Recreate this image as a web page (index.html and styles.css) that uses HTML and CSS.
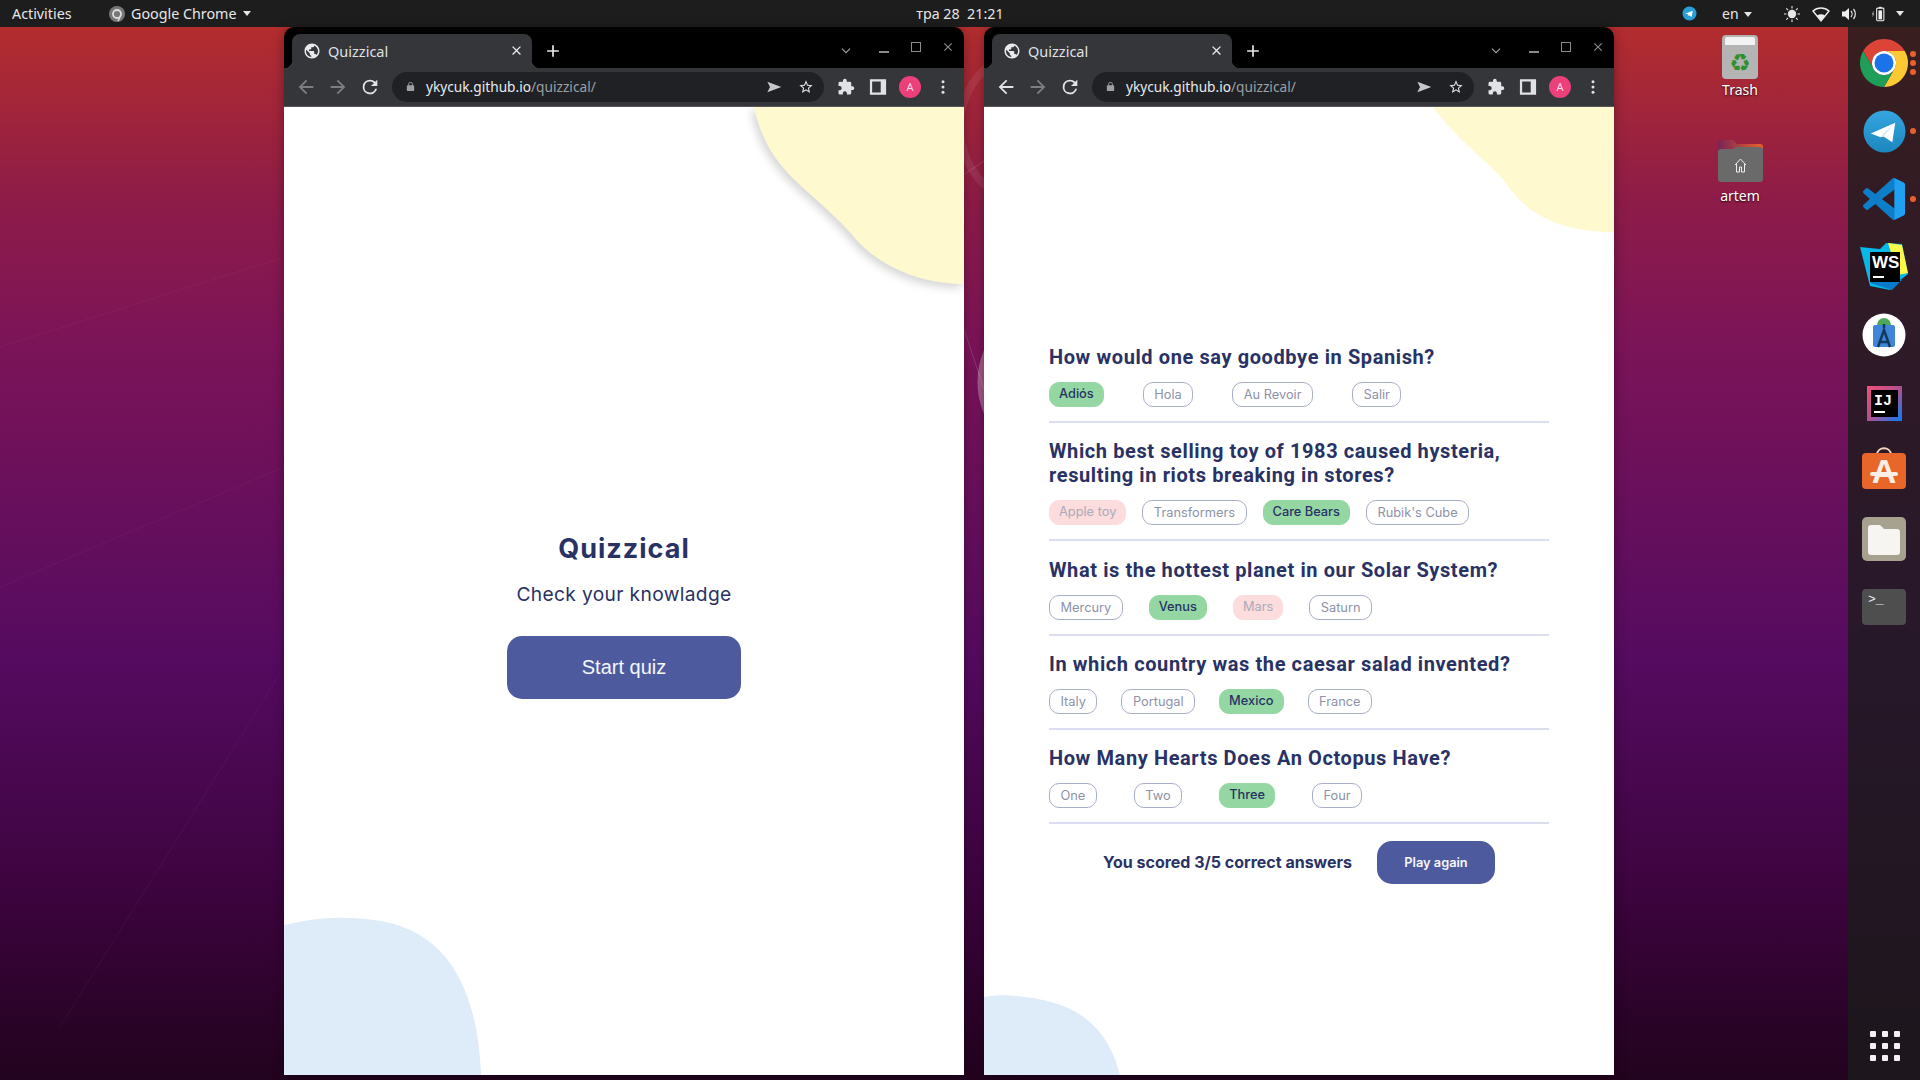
FILE: index.html
```html
<!DOCTYPE html>
<html lang="en">

<head>
    <meta charset="UTF-8">
    <title>Quizzical</title>
    <link rel="stylesheet" href="styles.css">
</head>

<body>
    <!-- Shared toolbar icons -->
    <svg class="sprite" xmlns="http://www.w3.org/2000/svg">
        <symbol id="i-globe" viewBox="0 0 24 24"><path d="M12 2C6.48 2 2 6.48 2 12s4.48 10 10 10 10-4.48 10-10S17.52 2 12 2zm-1 17.93c-3.95-.49-7-3.85-7-7.93 0-.62.08-1.21.21-1.79L9 15v1c0 1.1.9 2 2 2v1.93zm6.9-2.54c-.26-.81-1-1.39-1.9-1.39h-1v-3c0-.55-.45-1-1-1H8v-2h2c.55 0 1-.45 1-1V7h2c1.1 0 2-.9 2-2v-.41c2.93 1.19 5 4.06 5 7.41 0 2.08-.8 3.97-2.1 5.39z"/></symbol>
        <symbol id="i-back" viewBox="0 0 24 24"><path d="M20 11H7.83l5.59-5.59L12 4l-8 8 8 8 1.41-1.41L7.83 13H20z"/></symbol>
        <symbol id="i-forward" viewBox="0 0 24 24"><path d="M12 4l-1.41 1.41L16.17 11H4v2h12.17l-5.58 5.59L12 20l8-8z"/></symbol>
        <symbol id="i-reload" viewBox="0 0 24 24"><path d="M17.65 6.35A7.96 7.96 0 0 0 12 4a8 8 0 1 0 7.75 10h-2.08A6 6 0 1 1 12 6c1.66 0 3.14.69 4.22 1.78L13 11h7V4z"/></symbol>
        <symbol id="i-lock" viewBox="0 0 24 24"><path d="M18 9h-1V7a5 5 0 0 0-10 0v2H6a2 2 0 0 0-2 2v9a2 2 0 0 0 2 2h12a2 2 0 0 0 2-2v-9a2 2 0 0 0-2-2zM9 7a3 3 0 0 1 6 0v2H9z"/></symbol>
        <symbol id="i-send" viewBox="0 0 24 24"><path d="M2 4l21 8-21 8 4-8z"/></symbol>
        <symbol id="i-star" viewBox="0 0 24 24"><path d="M22 9.24l-7.19-.62L12 2 9.19 8.63 2 9.24l5.46 4.73L5.82 21 12 17.27 18.18 21l-1.63-7.03L22 9.24zM12 15.4l-3.76 2.27 1-4.28-3.32-2.88 4.38-.38L12 6.1l1.71 4.04 4.38.38-3.32 2.88 1 4.28L12 15.4z"/></symbol>
        <symbol id="i-puzzle" viewBox="0 0 24 24"><path d="M20.5 11H19V7c0-1.1-.9-2-2-2h-4V3.5C13 2.12 11.88 1 10.5 1S8 2.12 8 3.5V5H4c-1.1 0-1.99.9-1.99 2v3.8H3.5c1.49 0 2.7 1.21 2.7 2.7s-1.21 2.7-2.7 2.7H2V20c0 1.1.9 2 2 2h3.8v-1.5c0-1.49 1.21-2.7 2.7-2.7 1.49 0 2.7 1.21 2.7 2.7V22H17c1.1 0 2-.9 2-2v-4h1.5c1.38 0 2.5-1.12 2.5-2.5S21.88 11 20.5 11z"/></symbol>
        <symbol id="i-panel" viewBox="2 2 20 20"><path fill-rule="evenodd" d="M3 3.500h18v17H3zM5.500 6v12H15V6z"/></symbol>
        <symbol id="i-menu" viewBox="0 0 24 24"><circle cx="12" cy="5" r="2"/><circle cx="12" cy="12" r="2"/><circle cx="12" cy="19" r="2"/></symbol>
        <symbol id="i-close" viewBox="0 0 24 24"><path d="M19 6.41L17.59 5 12 10.59 6.41 5 5 6.41 10.59 12 5 17.59 6.41 19 12 13.41 17.59 19 19 17.59 13.41 12z"/></symbol>
        <symbol id="i-plus" viewBox="0 0 24 24"><path d="M19 13h-6v6h-2v-6H5v-2h6V5h2v6h6z"/></symbol>
        <symbol id="i-chevron" viewBox="0 0 24 24"><path d="M5 8l7 7 7-7" fill="none" stroke="currentColor" stroke-width="2"/></symbol>
    </svg>

    <!-- Top panel -->
    <header class="panel">
        <div class="panel-left">
            <span class="activities">Activities</span>
            <span class="app-menu">
                <svg class="app-icon" viewBox="0 0 16 16"><circle cx="8" cy="8" r="8" fill="#777"/><circle cx="8" cy="8" r="4" fill="none" stroke="#ddd" stroke-width="1.8"/><path d="M11 11l-2 4" stroke="#ddd" stroke-width="1.6"/></svg>
                Google Chrome
                <span class="caret"></span>
            </span>
        </div>
        <div class="clock">тра 28&nbsp; 21:21</div>
        <div class="panel-right">
            <svg class="tray-tg" viewBox="0 0 16 16"><circle cx="8" cy="8" r="7.5" fill="#2a9fd8"/><path d="M3.5 8.2L11.5 5l-1.2 6.6-2.4-1.7-1 1-.3-2z" fill="#fff"/></svg>
            <span class="lang">en <span class="caret"></span></span>
            <svg class="tray tray-sun" viewBox="0 0 18 18"><circle cx="9" cy="9" r="4.2" fill="#e8e8e8"/><path d="M9 1v2.5M9 14.5V17M1 9h2.5M14.5 9H17M3.3 3.3l1.8 1.8M12.9 12.9l1.8 1.8M3.3 14.7l1.8-1.8M12.9 5.1l1.8-1.8" stroke="#e8e8e8" stroke-width="1.1"/></svg>
            <svg class="tray tray-wifi" viewBox="0 0 18 18"><path d="M1 6c4.5-4 11.500-4 16 0l-8 10z" fill="none" stroke="#eee" stroke-width="1.4"/><path d="M5 10.500c2.300-1.600 5.700-1.600 8 0l-4 5.500z" fill="#eee"/></svg>
            <svg class="tray tray-sound" viewBox="0 0 18 18"><path d="M2 6.500h3L9 3v12l-4-3.500H2z" fill="#eee"/><path d="M11 6c1.400 1.600 1.400 4.400 0 6M13.500 4c2.400 2.800 2.400 7.200 0 10" fill="none" stroke="#eee" stroke-width="1.200"/></svg>
            <svg class="tray tray-batt" viewBox="0 0 20 18"><path d="M3 9.500L5 5v3.500h1L4 13V9.500z" fill="#999"/><rect x="8.500" y="2.500" width="8" height="14" rx="1" fill="none" stroke="#eee" stroke-width="1.200"/><rect x="11" y="1" width="3" height="1.500" fill="#eee"/><rect x="10.500" y="5" width="4" height="10" fill="#eee"/></svg>
            <span class="caret caret-last"></span>
        </div>
    </header>

    <div class="desktop">
        <!-- Faint lines of the wallpaper -->
        <svg class="wall-lines" viewBox="0 0 1920 1053">
            <circle cx="1060" cy="355" r="78" fill="none" stroke="#fff" stroke-opacity=".3" stroke-width="9"/>
            <circle cx="1040" cy="100" r="80" fill="none" stroke="#fff" stroke-opacity=".08" stroke-width="8"/>
            <path d="M960 150l30-20M960 290l30 90" stroke="#fff" stroke-opacity=".14" fill="none"/>
            <path d="M0 320l284-90M0 560l284-120M60 1000l224-360" stroke="#fff" stroke-opacity=".04" fill="none"/>
        </svg>

        <!-- Left window: start screen -->
        <section class="window window-start">
            <div class="titlebar">
                <div class="tab">
                    <svg class="ic ic-globe"><use href="#i-globe"/></svg>
                    <span class="tab-title">Quizzical</span>
                    <svg class="ic ic-tabclose"><use href="#i-close"/></svg>
                </div>
                <svg class="ic ic-plus"><use href="#i-plus"/></svg>
                <svg class="ic ic-tabs"><use href="#i-chevron"/></svg>
                <div class="win-controls">
                    <span class="ctl-min"></span>
                    <span class="ctl-max"></span>
                    <svg class="ic ctl-close"><use href="#i-close"/></svg>
                </div>
            </div>
            <div class="toolbar">
                <svg class="ic nav dim"><use href="#i-back"/></svg>
                <svg class="ic nav dim"><use href="#i-forward"/></svg>
                <svg class="ic nav"><use href="#i-reload"/></svg>
                <div class="omnibox">
                    <svg class="ic ic-lock"><use href="#i-lock"/></svg>
                    <span class="url">ykycuk.github.io<span class="url-path">/quizzical/</span></span>
                    <svg class="ic ic-send"><use href="#i-send"/></svg>
                    <svg class="ic ic-star"><use href="#i-star"/></svg>
                </div>
                <svg class="ic tool"><use href="#i-puzzle"/></svg>
                <svg class="ic tool"><use href="#i-panel"/></svg>
                <span class="avatar">A</span>
                <svg class="ic tool"><use href="#i-menu"/></svg>
            </div>
            <main class="page page-start">
                <svg class="blob" viewBox="0 0 680 968">
                    <path class="blob-yellow blob-shadow" d="M470 0C476 28 487 47 501 63C515 79 552 108 570 130C586 150 625 177 680 177V0Z"/>
                    <path class="blob-blue" d="M0 818C30 811 55 809 81 812C125 816 192 835 197 968H0Z"/>
                </svg>
                <h1 class="start-title">Quizzical</h1>
                <p class="start-sub">Check your knowladge</p>
                <button class="start-btn">Start quiz</button>
            </main>
        </section>

        <!-- Right window: results -->
        <section class="window window-quiz">
            <div class="titlebar">
                <div class="tab">
                    <svg class="ic ic-globe"><use href="#i-globe"/></svg>
                    <span class="tab-title">Quizzical</span>
                    <svg class="ic ic-tabclose"><use href="#i-close"/></svg>
                </div>
                <svg class="ic ic-plus"><use href="#i-plus"/></svg>
                <svg class="ic ic-tabs"><use href="#i-chevron"/></svg>
                <div class="win-controls">
                    <span class="ctl-min"></span>
                    <span class="ctl-max"></span>
                    <svg class="ic ctl-close"><use href="#i-close"/></svg>
                </div>
            </div>
            <div class="toolbar">
                <svg class="ic nav"><use href="#i-back"/></svg>
                <svg class="ic nav dim"><use href="#i-forward"/></svg>
                <svg class="ic nav"><use href="#i-reload"/></svg>
                <div class="omnibox">
                    <svg class="ic ic-lock"><use href="#i-lock"/></svg>
                    <span class="url">ykycuk.github.io<span class="url-path">/quizzical/</span></span>
                    <svg class="ic ic-send"><use href="#i-send"/></svg>
                    <svg class="ic ic-star"><use href="#i-star"/></svg>
                </div>
                <svg class="ic tool"><use href="#i-puzzle"/></svg>
                <svg class="ic tool"><use href="#i-panel"/></svg>
                <span class="avatar">A</span>
                <svg class="ic tool"><use href="#i-menu"/></svg>
            </div>
            <main class="page page-quiz">
                <svg class="blob" viewBox="0 0 630 968">
                    <path class="blob-yellow" d="M449 0C475 35 505 55 522 76C535 95 560 125 630 125V0Z"/>
                    <path class="blob-blue" d="M0 890C12 888 22 888 32 889C75 893 120 905 136 968H0Z"/>
                </svg>
                <div class="quiz">
                    <div class="question">
                        <h2>How would one say goodbye in Spanish?</h2>
                        <div class="answers gap-39">
                            <span class="pill correct">Adiós</span>
                            <span class="pill">Hola</span>
                            <span class="pill">Au Revoir</span>
                            <span class="pill">Salir</span>
                        </div>
                    </div>
                    <div class="question">
                        <h2>Which best selling toy of 1983 caused hysteria, resulting in riots breaking in stores?</h2>
                        <div class="answers gap-16">
                            <span class="pill wrong">Apple toy</span>
                            <span class="pill">Transformers</span>
                            <span class="pill correct">Care Bears</span>
                            <span class="pill">Rubik's Cube</span>
                        </div>
                    </div>
                    <div class="question">
                        <h2>What is the hottest planet in our Solar System?</h2>
                        <div class="answers gap-26">
                            <span class="pill">Mercury</span>
                            <span class="pill correct">Venus</span>
                            <span class="pill wrong">Mars</span>
                            <span class="pill">Saturn</span>
                        </div>
                    </div>
                    <div class="question">
                        <h2>In which country was the caesar salad invented?</h2>
                        <div class="answers gap-24">
                            <span class="pill">Italy</span>
                            <span class="pill">Portugal</span>
                            <span class="pill correct">Mexico</span>
                            <span class="pill">France</span>
                        </div>
                    </div>
                    <div class="question">
                        <h2>How Many Hearts Does An Octopus Have?</h2>
                        <div class="answers gap-37">
                            <span class="pill">One</span>
                            <span class="pill">Two</span>
                            <span class="pill correct">Three</span>
                            <span class="pill">Four</span>
                        </div>
                    </div>
                    <div class="score-row">
                        <span class="score">You scored 3/5 correct answers</span>
                        <button class="again-btn">Play again</button>
                    </div>
                </div>
            </main>
        </section>

        <!-- Desktop icons -->
        <div class="desk-icons">
            <div class="desk-item">
                <div class="trash-can"><span class="trash-lid"></span><span class="trash-sign">♻</span></div>
                <span class="desk-label">Trash</span>
            </div>
            <div class="desk-item desk-home">
                <svg class="home-folder" viewBox="0 0 45 42">
                    <defs><linearGradient id="folder-back" x1="0" x2="1"><stop offset="0" stop-color="#7a2458"/><stop offset="1" stop-color="#e9622a"/></linearGradient></defs>
                    <path d="M0 3a3 3 0 0 1 3-3h12l4 4h23a3 3 0 0 1 3 3v6H0z" fill="url(#folder-back)"/>
                    <path d="M0 12a3 3 0 0 1 3-3h12l3-2h24a3 3 0 0 1 3 3v29a3 3 0 0 1-3 3H3a3 3 0 0 1-3-3z" fill="#6b6a6b"/>
                    <path d="M17 25l5.500-6 5.500 6M18.500 24v8h3v-5h2v5h3v-8" fill="none" stroke="#eee" stroke-width="1"/>
                </svg>
                <span class="desk-label">artem</span>
            </div>
        </div>

        <!-- Dock -->
        <nav class="dock">
            <div class="dock-item">
                <svg class="dock-icon dock-chrome" viewBox="0 0 48 48">
                    <path d="M44.780 12A24 24 0 0 0 3.220 12L13.600 30A12 12 0 0 1 24 12Z" fill="#db4437"/>
                    <path d="M44.780 12A24 24 0 0 0 3.220 12L13.600 30A12 12 0 0 1 24 12Z" fill="#fcc934" transform="rotate(120 24 24)"/>
                    <path d="M44.780 12A24 24 0 0 0 3.220 12L13.600 30A12 12 0 0 1 24 12Z" fill="#1e9e58" transform="rotate(240 24 24)"/>
                    <circle cx="24" cy="24" r="12" fill="#fff"/><circle cx="24" cy="24" r="9.500" fill="#1a73e8"/>
                </svg>
                <span class="dots"><i></i><i></i><i></i></span>
            </div>
            <div class="dock-item">
                <svg class="dock-icon dock-tg" viewBox="0 0 44 44">
                    <defs><linearGradient id="tg" x1="0" y1="0" x2="0" y2="1"><stop offset="0" stop-color="#37a5e0"/><stop offset="1" stop-color="#1b87bd"/></linearGradient></defs>
                    <circle cx="22" cy="22" r="21.500" fill="url(#tg)"/>
                    <path d="M8 24L33 13l-3 20-9-6-3 1z" fill="#fff"/><path d="M33 13L19 26l2 1z" fill="#d5e8f3"/>
                </svg>
                <span class="dots"><i></i></span>
            </div>
            <div class="dock-item">
                <svg class="dock-icon dock-vs" viewBox="0 0 24 24">
                    <path d="M23.150 2.587L18.210.21a1.494 1.494 0 0 0-1.705.29l-9.460 8.630-4.120-3.128a.999.999 0 0 0-1.276.057L.327 7.261A1 1 0 0 0 .326 8.740L3.899 12 .326 15.260a1 1 0 0 0 .001 1.479L1.650 17.940a.999.999 0 0 0 1.276.057l4.120-3.128 9.460 8.630a1.492 1.492 0 0 0 1.704.29l4.942-2.377A1.500 1.500 0 0 0 24 20.060V3.939a1.500 1.500 0 0 0-.850-1.352zm-5.146 14.861L10.826 12l7.178-5.448v10.896z" fill="#0e7ec8"/>
                    <path d="M18.004 0.100l5.146 2.487A1.500 1.500 0 0 1 24 3.939V20.060a1.500 1.500 0 0 1-.850 1.352l-5.146 2.500V17.448V6.552z" fill="#1fa0f0"/>
                </svg>
                <span class="dots"><i></i></span>
            </div>
            <div class="dock-item">
                <svg class="dock-icon dock-ws" viewBox="0 0 48 48">
                    <path d="M0 4l20 2L26 0l16 1 6 30-10 8-8 8-20-4z" fill="#07b7e8"/>
                    <path d="M28 0l14 2 6 28-10 2z" fill="#fcf84a"/>
                    <path d="M10 40l22 7 10-10-12-8z" fill="#087cc8"/>
                    <rect x="10" y="9" width="30" height="30" fill="#000"/>
                    <text x="12" y="25" class="ws-text">WS</text>
                    <rect x="13" y="33" width="11" height="2" fill="#fff"/>
                </svg>
            </div>
            <div class="dock-item">
                <svg class="dock-icon" viewBox="0 0 44 44">
                    <circle cx="22" cy="22" r="21.500" fill="#fff"/>
                    <path d="M15 12a7 7 0 0 1 14 0z" fill="#4fa85a"/>
                    <rect x="11" y="12" width="22" height="22" rx="2" fill="#3f86d8"/>
                    <path d="M22 11v4M16 34l6-17 6 17M18 29h8" fill="none" stroke="#14395f" stroke-width="2.500"/>
                </svg>
            </div>
            <div class="dock-item">
                <svg class="dock-icon dock-ij" viewBox="0 0 35 35">
                    <defs><linearGradient id="ij" x1="0" y1="0" x2="1" y2="1"><stop offset="0" stop-color="#f2517a"/><stop offset=".5" stop-color="#b0508f"/><stop offset="1" stop-color="#087cfa"/></linearGradient></defs>
                    <rect width="35" height="35" fill="url(#ij)"/>
                    <rect x="4" y="4" width="27" height="27" fill="#000"/>
                    <text x="7" y="19" class="ij-text">IJ</text>
                    <rect x="7" y="25" width="11" height="2" fill="#fff"/>
                </svg>
            </div>
            <div class="dock-item">
                <svg class="dock-icon dock-store" viewBox="0 0 44 42">
                    <path d="M15 8c0-9 14-9 14 0" fill="none" stroke="#f3d5c0" stroke-width="1.800"/>
                    <rect y="6" width="44" height="36" rx="4" fill="#e9662a"/>
                    <text x="22" y="36" class="store-text">A</text>
                    <rect x="8" y="25" width="28" height="4" rx="2" fill="#fbeee5"/>
                </svg>
            </div>
            <div class="dock-item">
                <svg class="dock-icon" viewBox="0 0 44 44">
                    <rect width="44" height="44" rx="5" fill="#a7a190"/>
                    <path d="M6 11a3 3 0 0 1 3-3h9l4 4h13a3 3 0 0 1 3 3v20a3 3 0 0 1-3 3H9a3 3 0 0 1-3-3z" fill="#f6f5f2"/>
                </svg>
            </div>
            <div class="dock-item">
                <svg class="dock-icon dock-term" viewBox="0 0 44 36">
                    <rect width="44" height="36" rx="4" fill="#4e4e4e"/>
                    <text x="6" y="14" class="term-text">&gt;_</text>
                </svg>
            </div>
            <div class="app-grid">
                <i></i><i></i><i></i><i></i><i></i><i></i><i></i><i></i><i></i>
            </div>
        </nav>
    </div>
</body>

</html>
```

FILE: styles.css
```css
* {
    box-sizing: border-box;
}

html,
body {
    margin: 0px;
    padding: 0px;
    height: 100%;
}

body {
    width: 1920px;
    height: 1080px;
    overflow: hidden;
    display: flex;
    flex-direction: column;
    font-family: "Noto Sans", sans-serif;
    background: linear-gradient(180deg, #b32d2e 27px, #8e1c48 200px, #7c1458 340px, #550b60 660px, #3e0440 880px, #22031e 1080px);
}

.sprite {
    width: 0;
    height: 0;
    position: absolute;
}

/* Top panel */
.panel {
    height: 27px;
    flex: none;
    display: grid;
    grid-template-columns: 1fr auto 1fr;
    align-items: center;
    background: #1d1d1d;
    color: #e6e6e6;
    font-size: 14.3px;
}

.panel-left {
    display: flex;
    align-items: center;
    padding-left: 12px;
}

.activities {
    width: 97px;
}

.app-menu {
    display: flex;
    align-items: center;
    gap: 6px;
}

.app-icon {
    width: 16px;
    height: 16px;
}

.caret {
    display: inline-block;
    width: 0;
    height: 0;
    border-left: 4.5px solid transparent;
    border-right: 4.5px solid transparent;
    border-top: 5px solid #e6e6e6;
}

.clock {
    text-align: center;
}

.panel-right {
    display: flex;
    align-items: center;
    justify-content: flex-end;
}

.tray-tg {
    width: 15px;
    height: 15px;
    margin-right: 25px;
}

.lang {
    width: 44px;
    font-size: 14px;
    margin-right: 17px;
}

.lang .caret {
    vertical-align: 2px;
    margin-left: 2px;
}

.tray {
    width: 18px;
    height: 18px;
    margin-right: 10.5px;
}

.caret-last {
    margin: 0 16px 0 -1px;
}

/* Desktop */
.desktop {
    flex: 1;
    position: relative;
    display: flex;
    align-items: flex-start;
    padding-left: 284px;
    gap: 20px;
}

.wall-lines {
    position: absolute;
    left: 0;
    top: 0;
    width: 1920px;
    height: 1053px;
}

/* Browser window */
.window {
    position: relative;
    height: 1048px;
    display: flex;
    flex-direction: column;
    flex: none;
    background: #000;
    border-radius: 10px 10px 0 0;
    overflow: hidden;
    box-shadow: 0 2px 12px rgba(0, 0, 0, 0.35);
}

.window-start {
    width: 680px;
}

.window-quiz {
    width: 630px;
}

.ic {
    fill: currentColor;
    flex: none;
}

.titlebar {
    height: 41px;
    flex: none;
    display: flex;
    align-items: flex-end;
    padding-left: 8px;
    color: #e8eaed;
}

.tab {
    position: relative;
    width: 240px;
    height: 34px;
    display: flex;
    align-items: center;
    padding: 0 8px 1px 11px;
    background: #35363a;
    border-radius: 8px 8px 0 0;
    font-size: 14.5px;
}

.tab::before,
.tab::after {
    content: "";
    position: absolute;
    bottom: 0;
    width: 8px;
    height: 8px;
}

.tab::before {
    left: -8px;
    background: radial-gradient(circle at 0 0, transparent 8px, #35363a 8.5px);
}

.tab::after {
    right: -8px;
    background: radial-gradient(circle at 100% 0, transparent 8px, #35363a 8.5px);
}

.ic-globe {
    width: 18px;
    height: 18px;
    margin-right: 7px;
}

.tab-title {
    flex: 1;
    color: #dfe1e5;
}

.ic-tabclose {
    width: 15px;
    height: 15px;
}

.ic-plus {
    width: 20px;
    height: 20px;
    margin: 0 0 7px 11px;
}

.ic-tabs {
    width: 14px;
    height: 14px;
    margin: 0 0 10px auto;
    color: #a0a0a0;
}

.win-controls {
    display: flex;
    align-items: center;
    height: 41px;
    color: #8a8a8a;
}

.ctl-min {
    width: 10px;
    height: 2px;
    margin: 8px 0 0 26px;
    background: #8a8a8a;
}

.ctl-max {
    width: 10px;
    height: 10px;
    margin: -2px 0 0 22px;
    border: 1.5px solid #8a8a8a;
}

.ctl-close {
    width: 14px;
    height: 14px;
    margin: -2px 9px 0 20px;
}

.toolbar {
    height: 39px;
    flex: none;
    display: flex;
    align-items: center;
    padding: 0 12px 1px 11px;
    background: #35363a;
    border-bottom: 1px solid #55565a;
    color: #e0e2e6;
}

.nav {
    width: 22px;
    height: 22px;
    margin-right: 10px;
}

.nav.dim {
    color: #7d7e82;
}

.omnibox {
    flex: 1;
    height: 30px;
    display: flex;
    align-items: center;
    margin: 0 13px 0 1px;
    padding: 0 10px 0 13px;
    background: #202124;
    border-radius: 15px;
    font-size: 13.7px;
}

.ic-lock {
    width: 11px;
    height: 11px;
    color: #9aa0a6;
    margin-right: 10px;
}

.url {
    flex: 1;
    color: #e8eaed;
    white-space: nowrap;
}

.url-path {
    color: #9aa0a6;
}

.ic-send {
    width: 16px;
    height: 16px;
    margin-right: 16px;
    color: #c4c7cb;
}

.ic-star {
    width: 16px;
    height: 16px;
}

.tool {
    width: 18px;
    height: 18px;
    margin-right: 14px;
}

.tool:last-child {
    margin: 0;
}

.avatar {
    width: 22px;
    height: 22px;
    flex: none;
    margin: 0 13px 0 -2px;
    border-radius: 50%;
    background: #ec407a;
    color: #f6dce6;
    font-size: 11px;
    line-height: 22px;
    text-align: center;
}

/* Page content */
.page {
    position: relative;
    flex: 1;
    background: #fff;
    color: #293264;
    font-family: Inter, sans-serif;
}

.blob {
    position: absolute;
    left: 0;
    top: 0;
    width: 100%;
    height: 100%;
}

.blob-yellow {
    fill: #fff9d0;
}

.blob-shadow {
    filter: drop-shadow(-3px 4px 4px rgba(0, 0, 0, 0.16));
}

.blob-blue {
    fill: #deebf8;
}

.page-start {
    display: flex;
    flex-direction: column;
    align-items: center;
    padding-top: 425px;
}

.start-title {
    position: relative;
    margin: 0;
    font-size: 27px;
    line-height: 34px;
    font-weight: 700;
    letter-spacing: 1px;
}

.start-sub {
    position: relative;
    margin: 16px 0 0;
    font-size: 19.2px;
    line-height: 24px;
    letter-spacing: 0.35px;
}

.start-btn {
    position: relative;
    width: 234px;
    height: 63px;
    margin-top: 30px;
    border: none;
    border-radius: 15px;
    background: #4d5b9e;
    color: #f5f7fb;
    font-family: "Liberation Sans", Arial, sans-serif;
    font-size: 20px;
}

.page-quiz {
    padding: 238px 65px 0;
}

.quiz {
    position: relative;
    display: flex;
    flex-direction: column;
}

.question {
    padding-bottom: 14px;
    margin-bottom: 16.3px;
    border-bottom: 2px solid #dbdef0;
}

.question h2 {
    margin: 0 0 13px;
    font-family: Roboto, sans-serif;
    font-size: 20px;
    line-height: 24px;
    font-weight: 700;
    letter-spacing: 0.6px;
}

.answers {
    display: flex;
}

.gap-16 {
    gap: 16px;
}

.gap-24 {
    gap: 24px;
}

.gap-26 {
    gap: 26px;
}

.gap-37 {
    gap: 37px;
}

.gap-39 {
    gap: 39px;
}

.pill {
    height: 25px;
    padding: 0 10.5px;
    border: 1px solid #a9aec9;
    border-radius: 10px;
    color: #8d92a9;
    font-size: 12.8px;
    font-weight: 400;
    line-height: 24px;
}

.pill.correct {
    padding: 0 9px;
    border-color: #94d7a2;
    background: #94d7a2;
    color: #293264;
    font-weight: 500;
    line-height: 21px;
}

.pill.wrong {
    padding: 0 9px;
    border-color: #fcdcdc;
    background: #fcdcdc;
    color: #a9abbb;
    line-height: 21px;
}

.score-row {
    display: flex;
    align-items: center;
    justify-content: center;
    gap: 25px;
}

.score {
    font-size: 16px;
    font-weight: 700;
}

.again-btn {
    width: 118px;
    height: 43px;
    margin-top: 1px;
    border: none;
    border-radius: 15px;
    background: #4d5b9e;
    color: #f5f7fb;
    font-family: Inter, sans-serif;
    font-size: 12.8px;
    font-weight: 600;
}

/* Desktop icons */
.desk-icons {
    position: absolute;
    left: 1695px;
    top: 8px;
    width: 90px;
    display: flex;
    flex-direction: column;
    align-items: center;
}

.desk-item {
    display: flex;
    flex-direction: column;
    align-items: center;
}

.desk-home {
    margin-top: 40px;
}

.desk-label {
    color: #fff;
    font-size: 14px;
    line-height: 20px;
    margin-top: 1px;
    text-shadow: 0 1px 2px rgba(0, 0, 0, 0.8);
}

.desk-home .desk-label {
    margin-top: 4px;
}

.trash-can {
    position: relative;
    width: 36px;
    height: 44px;
    display: flex;
    align-items: center;
    justify-content: center;
    padding-top: 12px;
    border-radius: 4px;
    background: #b4b4b4;
}

.trash-lid {
    position: absolute;
    left: 3px;
    right: 3px;
    top: 2px;
    height: 8px;
    border-radius: 2px 2px 0 0;
    background: #f2f2f2;
}

.trash-sign {
    color: #2f8f2f;
    font-family: "DejaVu Sans", sans-serif;
    font-size: 24px;
    line-height: 24px;
}

.home-folder {
    width: 45px;
    height: 42px;
}

/* Dock */
.dock {
    position: absolute;
    right: 0;
    top: 0;
    bottom: 0;
    width: 72px;
    display: flex;
    flex-direction: column;
    padding-top: 2px;
    background: rgba(28, 28, 28, 0.8);
}

.dock-item {
    position: relative;
    height: 68px;
    flex: none;
    display: flex;
    align-items: center;
    justify-content: center;
}

.dock-icon {
    width: 44px;
    height: 44px;
}

.dock-chrome {
    width: 48px;
    height: 48px;
}

.dock-tg {
    width: 43px;
    height: 43px;
}

.dock-vs {
    width: 42px;
    height: 42px;
}

.dock-ws {
    width: 48px;
    height: 48px;
}

.dock-ij {
    width: 35px;
    height: 35px;
}

.dock-store {
    height: 42px;
    margin-top: -6px;
}

.dock-term {
    height: 36px;
}

.dots {
    position: absolute;
    right: 4px;
    top: 50%;
    display: flex;
    flex-direction: column;
    gap: 3px;
    transform: translateY(-50%);
}

.dots i {
    width: 6px;
    height: 6px;
    border-radius: 50%;
    background: #e9602c;
}

.ws-text,
.ij-text {
    fill: #fff;
    font-family: "Liberation Sans", sans-serif;
    font-weight: 700;
}

.ws-text {
    font-size: 17px;
}

.ij-text {
    font-family: "Liberation Mono", monospace;
    font-size: 15px;
}

.store-text {
    fill: #fbeee5;
    font-family: "Liberation Sans", sans-serif;
    font-size: 34px;
    font-weight: 700;
    text-anchor: middle;
}

.term-text {
    fill: #eee;
    font-family: "Liberation Mono", monospace;
    font-size: 13px;
}

.app-grid {
    margin: auto 0 19px 22px;
    display: grid;
    grid-template-columns: repeat(3, 6px);
    gap: 6px;
}

.app-grid i {
    width: 6px;
    height: 6px;
    border-radius: 1px;
    background: #f4f0f4;
}
```
